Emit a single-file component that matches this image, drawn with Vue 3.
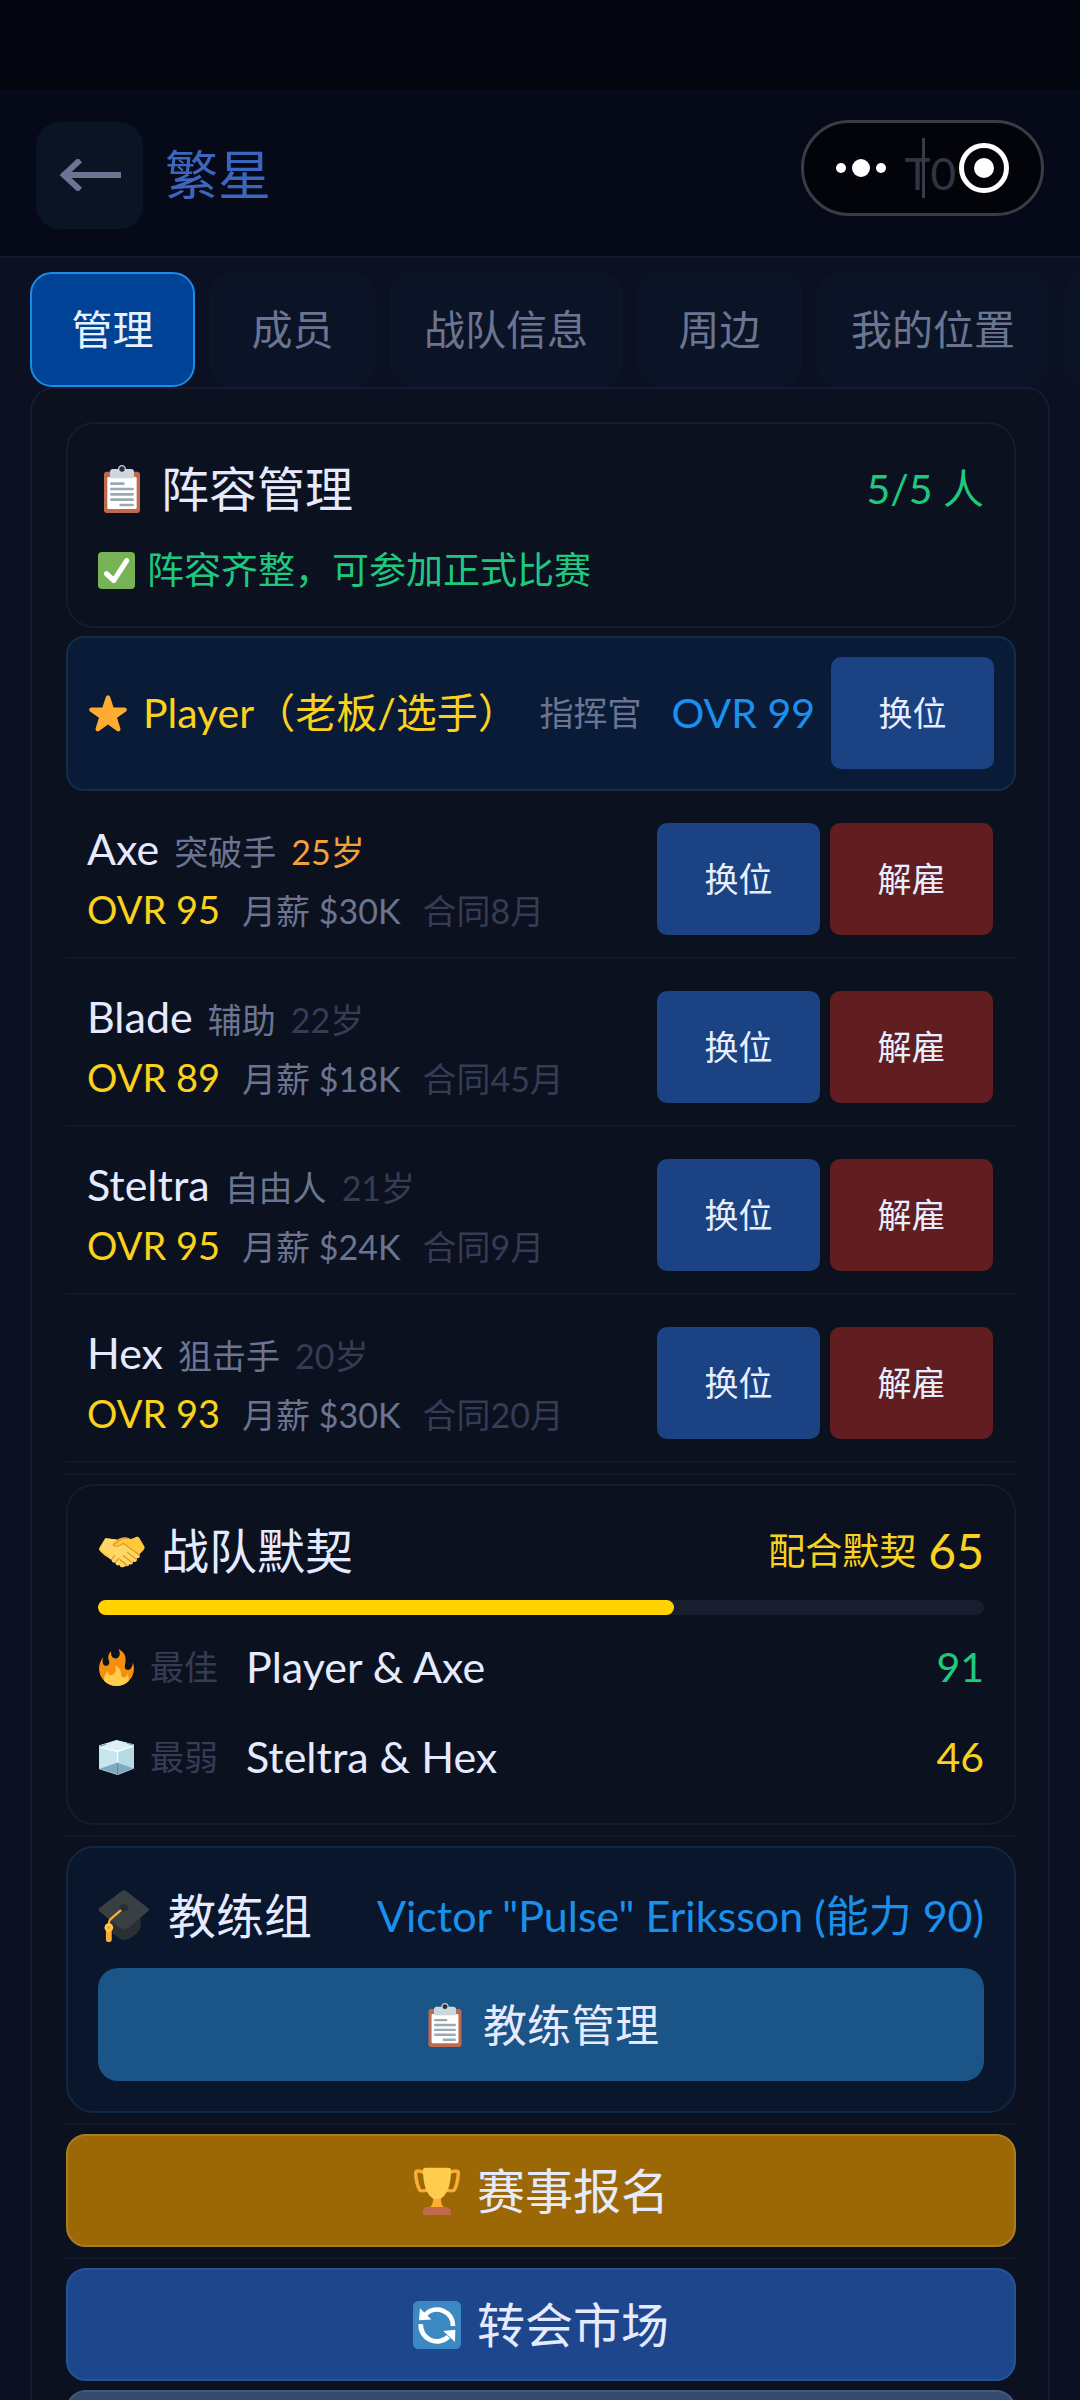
<script setup>
import { ref } from 'vue'

const tabs = ['管理', '成员', '战队信息', '周边', '我的位置', '']
const active = ref(0)

const players = [
  { name: 'Axe', role: '突破手', age: 25, ovr: 95, pay: '$30K', months: 8, veteran: true },
  { name: 'Blade', role: '辅助', age: 22, ovr: 89, pay: '$18K', months: 45 },
  { name: 'Steltra', role: '自由人', age: 21, ovr: 95, pay: '$24K', months: 9 },
  { name: 'Hex', role: '狙击手', age: 20, ovr: 93, pay: '$30K', months: 20 },
]

const chemistry = 65
const pairs = [
  { icon: 'fire', label: '最佳', names: 'Player & Axe', score: 91, tone: 'green' },
  { icon: 'ice', label: '最弱', names: 'Steltra & Hex', score: 46, tone: 'yellow' },
]
</script>

<template>
  <div class="app">
    <svg class="defs" aria-hidden="true">
      <symbol id="clipboard" viewBox="0 0 36 36">
        <path fill="#C1694F" d="M31.500 34c0 1.104-.896 2-2 2h-23c-1.104 0-2-.896-2-2V7c0-1.104.896-2 2-2h23c1.104 0 2 .896 2 2z" />
        <path fill="#FFF" d="M29 32c0 .553-.447 1-1 1H8c-.552 0-1-.447-1-1V10c0-.552.448-1 1-1h20c.553 0 1 .448 1 1z" />
        <path fill="#CCD6DD" d="M25 3h-4c0-1.657-1.343-3-3-3s-3 1.343-3 3h-4c-1.104 0-2 .896-2 2v5h18V5c0-1.104-.896-2-2-2z" />
        <circle fill="#292F33" cx="18" cy="3" r="2" />
        <path stroke="#99AAB5" stroke-width="2" stroke-linecap="round" d="M10 14h9M10 18h16M10 22h16M10 26h16M17 30h9" />
      </symbol>
      <symbol id="check" viewBox="0 0 36 36">
        <rect width="36" height="36" rx="4" fill="#77B255" />
        <path fill="#FFF" d="M29.28 6.362c-1.156-.751-2.704-.422-3.458.736L14.936 23.877l-5.029-4.65c-1.014-.938-2.596-.875-3.533.138-.937 1.014-.875 2.596.139 3.533l7.209 6.666c.48.445 1.09.665 1.696.665.673 0 1.534-.282 2.099-1.139.332-.506 12.5-19.27 12.5-19.27.751-1.159.421-2.707-.737-3.458z" />
      </symbol>
      <symbol id="star" viewBox="0 0 36 36">
        <path fill="#FFAC33" d="M27.287 34.627c-.404 0-.806-.124-1.152-.371L18 28.422l-8.135 5.834a1.97 1.97 0 0 1-2.312-.008 1.971 1.971 0 0 1-.721-2.194l3.034-9.792-8.062-5.681a1.98 1.98 0 0 1-.708-2.203 1.978 1.978 0 0 1 1.866-1.363L12.947 13l3.179-9.549a1.976 1.976 0 0 1 3.749 0L23 13l10.036.015a1.975 1.975 0 0 1 1.159 3.566l-8.062 5.681 3.034 9.792a1.97 1.97 0 0 1-1.880 2.573z" />
      </symbol>
      <symbol id="fire" viewBox="0 0 36 36">
        <path fill="#F4900C" d="M35 19c0-2.062-.367-4.039-1.040-5.868-.46 5.389-3.333 8.157-6.335 6.868-2.812-1.208-.917-5.917-.777-8.164.236-3.809-.012-8.169-6.931-11.794 2.875 5.500.333 8.917-2.333 9.125-2.958.231-5.667-2.542-4.667-7.042-3.238 2.386-3.332 6.402-2.333 9 1.042 2.708-.042 4.958-2.583 5.208-2.840.280-4.418-3.041-2.963-8.333C2.520 10.965 1 14.805 1 19c0 9.389 7.611 17 17 17s17-7.611 17-17z" />
        <path fill="#FFCC4D" d="M28.394 23.999c.148 3.084-2.561 4.293-4.019 3.709-2.106-.843-1.541-2.291-2.083-5.291s-2.625-5.083-5.708-6c2.250 6.333-1.247 8.667-3.080 9.084-1.872.426-3.753-.001-3.968-4.007C7.352 23.668 6 26.676 6 30c0 .368.023.73.055 1.090C9.125 34.124 13.342 36 18 36s8.875-1.876 11.945-4.910c.032-.36.055-.722.055-1.090 0-2.187-.584-4.236-1.606-6.001z" />
      </symbol>
      <symbol id="ice" viewBox="0 0 36 36">
        <path fill="#C6E5EC" stroke="#C6E5EC" stroke-linejoin="round" d="M1.500 6.500 18 1.500l16.500 4v23L19 34.500 1.500 29z" />
        <path fill="#DDF1F5" d="M1.500 6.500 18 1.500l16.500 4-15.500 6z" />
        <path fill="#A7D2DD" d="M19 12 34.500 6v22L19 23z" opacity=".55" />
        <path fill="#7FA9C0" d="M1.500 29 18.500 23l16 5.500L19 34.500z" />
        <path fill="none" stroke="#F3FBFD" stroke-width="1.500" d="M2 8l17 4 15-5M19 12v11" />
        <path fill="none" stroke="#5C8299" stroke-width=".8" d="M19 23v12M2 7l6-2M28 4l6 2" />
      </symbol>
      <symbol id="handshake" viewBox="0 0 36 36">
        <path fill="#FFC83D" d="M5.500 8.500 1.200 15.200c-.6 1-.5 2.200.4 3l3.600 3.300 14.800 8.300 8.500-6.500 5.700-6c.8-.9 1-2 .4-3L31 8.200c-.6-.9-1.600-1.100-2.500-.7l-4 1.600c-3-1.600-7-1.500-9.500.2z" />
        <path fill="#FFD766" d="m5.500 8.500 7.500.800L11 13c0 2 3 2.300 5.500.500l2.500-1.200L31 21c1 1.200-.6 3.200-2.300 2.300l.4.500c.8 1.600-1.400 3.200-2.900 2.100.7 1.500-1.200 2.900-2.700 2-.2 1.300-1.800 1.900-3.200 1.100-1.500 2-4 1.400-4-.500-1.700 1-3.600-.3-3.200-1.900-1.800.5-3.300-.8-2.700-2.500-1.900.3-3.100-1.300-2.300-2.900L1.200 17z" />
        <path fill="none" stroke="#E09A2B" stroke-width="1" stroke-linecap="round" d="M22.500 8.500c-3-.6-5 .2-6.500 1.500l-4.500 3.500c1 1.500 3.500 1.200 5.500 0l2-1.300L31 21M22 19l6.500 5M19 21.500l6.500 5M16.500 24.500l5 4M12.500 21.500 10 24.500M15.500 23.500 13 26.500" />
      </symbol>
      <symbol id="cap" viewBox="0 0 36 36">
        <path fill="#292F33" d="M29.500 13v11.500c0 4-5.500 8.500-10 10-1 .4-1.800.4-2.700 0-4-1.500-8-5-8-8V16z" />
        <path fill="#394044" d="M16.500.7c1-.8 2-.8 3 0l15.300 12c.7.600.7 1.200 0 1.800L22 25.500c-2.500 1.900-5.300 1.900-8 0L.800 14.600c-.6-.5-.6-1.300 0-1.900z" />
        <ellipse cx="18" cy="12.300" rx="3.200" ry="2.500" fill="#292F33" />
        <path fill="none" stroke="#FFAC33" stroke-width="1.600" stroke-linecap="round" d="m15.500 14.300-7 6c-.8.8-1 1.500-1 5" />
        <rect x="5.500" y="27" width="4" height="9" rx="1.500" fill="#FFAC33" />
        <circle cx="7.500" cy="26" r="3" fill="#FFCC4D" />
        <circle cx="7.500" cy="26" r="1.400" fill="#FFAC33" />
      </symbol>
      <symbol id="trophy" viewBox="0 0 36 36">
        <path fill="none" stroke="#FFAC33" stroke-width="2.600" stroke-linejoin="round" d="M10 5.800C8.800 3.500 2.800 2 2 4c.2 5 1 9.500 3 13.200.7 1.300 3 .3 7.500.3M26 5.800c1.200-2.300 7.200-3.800 8-1.800-.2 5-1 9.500-3 13.200-.7 1.300-3 .3-7.500.3" />
        <path fill="#FFAC33" d="M15 21h6v4c0 2.500 1 4.500 3 6H12c2-1.500 3-3.500 3-6z" />
        <path fill="#FFCC4D" d="M7.500 2c0-1 .8-1.500 2-1.500h17c1.200 0 2 .500 2 1.500C28.500 13 26 20 21.500 23.200c-1 1-6 1-7 0C10 20 7.500 13 7.500 2z" />
        <path fill="#C1694F" d="M7.500 36v-2c0-2.500 1.500-4 4-4h13c2.500 0 4 1.500 4 4v2z" />
      </symbol>
      <symbol id="cycle" viewBox="0 0 36 36">
        <rect width="36" height="36" rx="4" fill="#3B88C3" />
        <path fill="none" stroke="#FFF" stroke-width="3.600" d="M9.500 10A12 12 0 0 1 30 18.700M5.800 17.300A12.200 12.200 0 0 0 26.500 26.800" />
        <path fill="#FFF" d="M5.200 5.500 4.500 14.500l9.300-.7zM31.500 30.800 31.700 21.500l-9 1z" />
      </symbol>
    </svg>

    <header class="header">
      <button class="back" type="button">
        <svg width="62" height="32" viewBox="0 0 62 32" fill="none" stroke="currentColor" stroke-width="6">
          <path d="M3 16h59M21 1 5 16l16 15" />
        </svg>
      </button>
      <h1>繁星</h1>
      <span class="tier">T0</span>
      <div class="capsule">
        <button type="button">
          <svg width="52" height="20" viewBox="0 0 52 20" fill="#fff">
            <circle cx="6" cy="10" r="5" /><circle cx="26" cy="10" r="9" /><circle cx="46" cy="10" r="5" />
          </svg>
        </button>
        <i></i>
        <button type="button">
          <svg width="50" height="50" viewBox="0 0 50 50">
            <circle cx="25" cy="25" r="22.500" fill="none" stroke="#fff" stroke-width="5" />
            <circle cx="25" cy="25" r="10" fill="#fff" />
          </svg>
        </button>
      </div>
    </header>

    <nav class="tabs">
      <button
        v-for="(tab, i) in tabs"
        :key="i"
        type="button"
        :class="{ on: i === active }"
        @click="active = i"
      >{{ tab }}</button>
    </nav>

    <main class="scroll">
      <div class="panel">
        <section class="card">
          <div class="head">
            <h2><svg class="e48"><use href="#clipboard" /></svg>阵容管理</h2>
            <span class="green">5/5 人</span>
          </div>
          <p class="status green"><svg class="e37"><use href="#check" /></svg>阵容齐整，可参加正式比赛</p>
        </section>

        <div class="owner">
          <svg class="e40"><use href="#star" /></svg>
          <span class="owner-name">Player（老板/选手）</span>
          <span class="role">指挥官</span>
          <span class="owner-ovr">OVR 99</span>
          <button class="act swap" type="button">换位</button>
        </div>

        <div v-for="p in players" :key="p.name" class="row">
          <div class="info">
            <div class="line">
              <span class="name">{{ p.name }}</span>
              <span class="role">{{ p.role }}</span>
              <span class="age" :class="{ veteran: p.veteran }">{{ p.age }}岁</span>
            </div>
            <div class="line stats">
              <span class="ovr">OVR {{ p.ovr }}</span>
              <span class="pay">月薪 {{ p.pay }}</span>
              <span class="term">合同{{ p.months }}月</span>
            </div>
          </div>
          <button class="act swap" type="button">换位</button>
          <button class="act dismiss" type="button">解雇</button>
        </div>

        <hr>

        <section class="card">
          <div class="head">
            <h2><svg class="e48"><use href="#handshake" /></svg>战队默契</h2>
            <span class="chem yellow">配合默契 <b>{{ chemistry }}</b></span>
          </div>
          <div class="bar"><div :style="{ width: chemistry + '%' }"></div></div>
          <div v-for="p in pairs" :key="p.label" class="pair">
            <svg class="e37"><use :href="'#' + p.icon" /></svg>
            <span class="pair-label">{{ p.label }}</span>
            <span class="pair-names">{{ p.names }}</span>
            <span :class="p.tone">{{ p.score }}</span>
          </div>
        </section>

        <hr>

        <section class="card coach">
          <div class="head">
            <h2><svg class="e52"><use href="#cap" /></svg>教练组</h2>
            <span class="coach-name">Victor "Pulse" Eriksson (能力 90)</span>
          </div>
          <button class="manage" type="button"><svg class="e44"><use href="#clipboard" /></svg>教练管理</button>
        </section>

        <hr>
        <button class="wide gold" type="button"><svg class="e48"><use href="#trophy" /></svg>赛事报名</button>
        <hr>
        <button class="wide blue" type="button"><svg class="e48"><use href="#cycle" /></svg>转会市场</button>
        <button class="wide slate" type="button"></button>
      </div>
    </main>
  </div>
</template>

<style>
body {
  background: #0b1022;
}
</style>

<style scoped>
* {
  box-sizing: border-box;
}
.app {
  display: flex;
  flex-direction: column;
  height: 100vh;
  overflow: hidden;
  background: #0b1022;
  color: #e6eaff;
  font-family: Lato, "Noto Sans CJK SC", sans-serif;
  font-size: 41px;
  line-height: 52px;
}
.defs {
  position: absolute;
  width: 0;
  height: 0;
}
h1, h2, p {
  margin: 0;
  font-weight: 400;
}
button {
  margin: 0;
  padding: 0;
  border: 0;
  background: none;
  color: inherit;
  font: inherit;
}
.e37 { width: 37px; height: 37px; flex: none; }
.e40 { width: 40px; height: 40px; flex: none; }
.e44 { width: 44px; height: 44px; flex: none; }
.e48 { width: 48px; height: 48px; flex: none; }
.e52 { width: 52px; height: 52px; flex: none; }
.green { color: #1ec97f; }
.yellow { color: #fad11e; }

.header {
  position: relative;
  flex: none;
  display: flex;
  align-items: center;
  height: 258px;
  padding: 94px 124px 0 36px;
  border-bottom: 2px solid #101a2c;
  background: linear-gradient(#03060f 0 90px, #060a18 90px);
}
.back {
  display: flex;
  align-items: center;
  justify-content: center;
  width: 107px;
  height: 107px;
  border-radius: 24px;
  background: #0b1424;
  color: #6b7592;
}
h1 {
  margin-left: 22px;
  color: #3c66be;
  font-size: 53px;
}
.tier {
  margin: 0 0 4px auto;
  color: #6c7397;
  font-size: 44px;
}
.capsule {
  position: absolute;
  top: 120px;
  right: 36px;
  display: flex;
  align-items: center;
  justify-content: space-between;
  width: 243px;
  height: 96px;
  padding: 0 32px 0 31px;
  border: 3px solid #3a3c45;
  border-radius: 48px;
  background: rgba(0, 0, 0, 0.55);
}
.capsule button {
  display: flex;
}
.capsule i {
  width: 3px;
  height: 60px;
  background: #3a3c45;
}

.tabs {
  flex: none;
  display: flex;
  gap: 15px;
  padding: 14px 0 0 30px;
  overflow: hidden;
}
.tabs button {
  flex: none;
  min-width: 165px;
  height: 115px;
  padding: 0 32px;
  border: 2px solid #0c1526;
  border-radius: 22px;
  background: #0b1426;
  color: #6b7592;
}
.tabs .on {
  border-color: #1b8ce6;
  background: #004396;
  color: #e8f2ff;
}

.scroll {
  flex: 1;
  min-height: 0;
  overflow-y: auto;
  scrollbar-width: none;
  padding: 0 30px;
}
.panel {
  padding: 33px 32px 33px 34px;
  border: 2px solid #131c31;
  border-radius: 24px;
  background: #0b111f;
}
.card {
  padding: 30px;
  border: 2px solid #141c30;
  border-radius: 28px;
}
.head {
  display: flex;
  align-items: center;
  justify-content: space-between;
  height: 70px;
}
h2 {
  display: flex;
  align-items: center;
  gap: 15px;
  font-size: 48px;
}
.status {
  display: flex;
  align-items: center;
  gap: 12px;
  margin-top: 20px;
  font-size: 37px;
}

.owner {
  display: flex;
  align-items: center;
  margin-top: 8px;
  padding: 19px 20px 20px;
  border: 2px solid #112d4a;
  border-radius: 18px;
  background: #0a1b37;
}
.owner-name {
  margin-left: 15px;
  color: #fad11e;
}
.owner .role {
  margin-left: auto;
}
.owner-ovr {
  margin: 0 16px 0 30px;
  color: #1a90ec;
}
.role {
  color: #6b7592;
  font-size: 34px;
}
.act {
  flex: none;
  width: 163px;
  height: 112px;
  border-radius: 10px;
  color: #e6eeff;
  font-size: 34px;
}
.swap {
  background: #1b4383;
}
.dismiss {
  background: #621d20;
}
.row {
  display: flex;
  align-items: center;
  gap: 10px;
  margin-top: 12px;
  padding: 20px 23px 22px 21px;
  border-bottom: 2px solid #10172a;
}
.info {
  flex: 1;
  display: flex;
  flex-direction: column;
  gap: 8px;
}
.line {
  display: flex;
  align-items: baseline;
  gap: 15px;
  height: 52px;
  white-space: nowrap;
  font-size: 34px;
}
.stats {
  gap: 22px;
}
.name {
  font-size: 43px;
}
.age, .term {
  color: #353c54;
}
.age.veteran {
  color: #f5a03c;
}
.ovr {
  color: #fad11e;
  font-size: 38px;
}
.pay {
  color: #6b7592;
}

hr {
  height: 2px;
  margin: 10px 0 9px;
  border: 0;
  background: #10182a;
}
.chem {
  display: flex;
  align-items: center;
  gap: 12px;
  font-size: 37px;
}
.chem b {
  font-size: 48px;
  font-weight: 400;
}
.bar {
  height: 15px;
  margin-top: 14px;
  border-radius: 8px;
  background: #181e2d;
}
.bar div {
  height: 100%;
  border-radius: 8px;
  background: #ffd200;
}
.pair {
  display: flex;
  align-items: center;
  height: 72px;
  margin-top: 18px;
}
.bar + .pair {
  margin-top: 16px;
}
.pair-label {
  margin: 0 28px 0 15px;
  color: #353c54;
  font-size: 34px;
}
.pair-names {
  flex: 1;
  font-size: 43px;
}

.coach {
  border-color: #102843;
  background: #0a162b;
}
.coach .head {
  height: 75px;
}
.coach h2 {
  gap: 18px;
}
.coach-name {
  color: #1a90ec;
  font-size: 43px;
}
.manage, .wide {
  display: flex;
  align-items: center;
  justify-content: center;
  gap: 16px;
  width: 100%;
  height: 113px;
  border-radius: 20px;
  font-size: 48px;
}
.manage {
  margin-top: 15px;
  background: #1b5486;
  font-size: 44px;
}
.wide {
  border: 2px solid;
}
.gold {
  border-color: #a87e1c;
  background: #9c6805;
}
.blue {
  border-color: #245496;
  background: #1d468c;
}
.slate {
  margin-top: 9px;
  border-color: #41597c;
  background: #334c6e;
}
</style>
